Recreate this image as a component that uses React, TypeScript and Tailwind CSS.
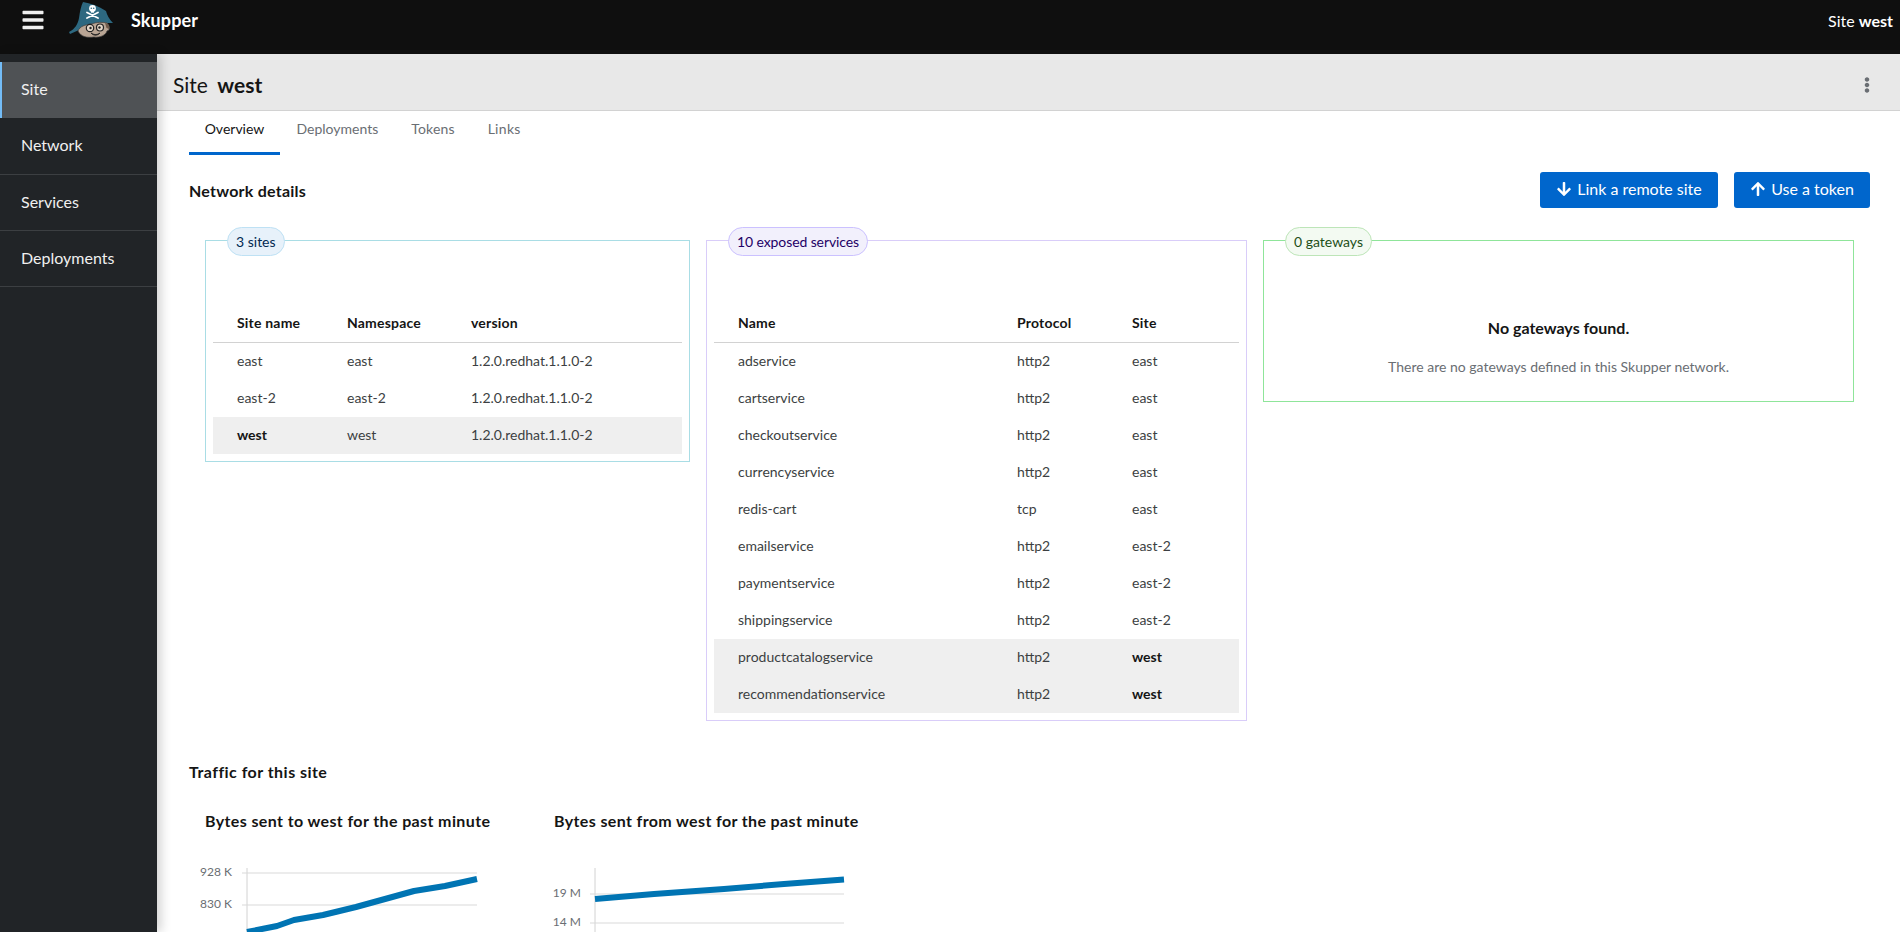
import React from "react";
import { FaArrowDown, FaArrowUp, FaBars, FaEllipsisV } from "react-icons/fa";

const font = "font-['Lato','Liberation_Sans',sans-serif]";

function Logo() {
  return (
    <svg width="46" height="40" viewBox="0 0 46 40" className="block">
      <path d="M14 2 C21 3 30 6 37 11 C38 15 40 19 44 23 L36 23 L20 25 L10 30 L1 34 L0 32 C6 29 9 24 10 18 C11 11 12 6 14 2 Z" fill="#2d6880" />
      <path d="M9 31 C11 26 16 25 22 24 C28 22 34 22 38 23 C40 25 41 27 40 30 L38 31 C37 35 31 38 25 37 C18 38 12 37 9 31 Z" fill="#b9a594" stroke="#3a3a3a" strokeWidth="0.7" />
      <circle cx="23.500" cy="8.500" r="3.400" fill="#fff" />
      <rect x="22" y="10.500" width="3" height="2.200" fill="#fff" />
      <path d="M18 12.500 L29 18 M29 12.500 L18 18" stroke="#fff" strokeWidth="1.800" strokeLinecap="round" />
      <circle cx="22.300" cy="8.300" r="0.800" fill="#2d6880" />
      <circle cx="24.700" cy="8.300" r="0.800" fill="#2d6880" />
      <circle cx="21" cy="28" r="3.700" fill="#e4d8ca" stroke="#222" strokeWidth="1.200" />
      <circle cx="31" cy="27.500" r="3.500" fill="#e4d8ca" stroke="#222" strokeWidth="1.200" />
      <circle cx="21.500" cy="28" r="1.200" fill="#222" />
      <circle cx="30.500" cy="27.500" r="1.200" fill="#222" />
      <path d="M22 33 C25 35 28 35 31 33 C28 36 25 36 22 33 Z" fill="#222" stroke="#222" strokeWidth="0.800" />
      <path d="M36 23 C39 23 41 26 40 29 L37.500 28 Z" fill="#6f5a4b" />
    </svg>
  );
}

const navItems = ["Site", "Network", "Services", "Deployments"];

function Sidebar() {
  return (
    <aside className="z-10 w-[157px] shrink-0 bg-[#212427] pt-2 shadow-[4px_0_10px_rgba(3,3,3,0.18)]">
      {navItems.map((n, i) => (
        <div
          key={n}
          className={
            i === 0
              ? "flex h-14 items-center border-l-2 border-[#73bcf7] bg-[#4f5255] pb-[2px] pl-[19px] text-base text-[#f0f0f0]"
              : i === 1
                ? "flex h-[57px] items-center border-b border-[#3c3f42] pb-[3px] pl-[21px] text-base text-[#f0f0f0]"
                : "flex h-14 items-center border-b border-[#3c3f42] pb-[2px] pl-[21px] text-base text-[#f0f0f0]"
          }
        >
          {n}
        </div>
      ))}
    </aside>
  );
}

function Pill({ label, cls }: { label: string; cls: string }) {
  return (
    <div className={`absolute left-[21px] top-[-14px] flex h-[29px] items-center rounded-full border px-2 text-[14px] ${cls}`}>
      {label}
    </div>
  );
}

type Row = { cells: string[]; bold?: number; hi?: boolean };

function DataTable({ cols, heads, rows }: { cols: string[]; heads: string[]; rows: Row[] }) {
  return (
    <div className="text-[14px]">
      <div className="flex h-[38px] items-center border-b border-[#d2d2d2] pb-[2px] font-bold tracking-[0.2px] text-[#151515]">
        {heads.map((h, i) => (
          <div key={h} className={cols[i]}>{h}</div>
        ))}
      </div>
      {rows.map((r) => (
        <div key={r.cells[0]} className={`flex h-[37px] items-center pb-[2px] text-[#3c3f42] ${r.hi ? "bg-[#efefef]" : ""}`}>
          {r.cells.map((c, i) => (
            <div key={i} className={`${cols[i]} ${r.bold === i ? "font-bold text-[#151515]" : ""}`}>{c}</div>
          ))}
        </div>
      ))}
    </div>
  );
}

const siteRows: Row[] = [
  { cells: ["east", "east", "1.2.0.redhat.1.1.0-2"] },
  { cells: ["east-2", "east-2", "1.2.0.redhat.1.1.0-2"] },
  { cells: ["west", "west", "1.2.0.redhat.1.1.0-2"], bold: 0, hi: true },
];

const svcRows: Row[] = [
  { cells: ["adservice", "http2", "east"] },
  { cells: ["cartservice", "http2", "east"] },
  { cells: ["checkoutservice", "http2", "east"] },
  { cells: ["currencyservice", "http2", "east"] },
  { cells: ["redis-cart", "tcp", "east"] },
  { cells: ["emailservice", "http2", "east-2"] },
  { cells: ["paymentservice", "http2", "east-2"] },
  { cells: ["shippingservice", "http2", "east-2"] },
  { cells: ["productcatalogservice", "http2", "west"], bold: 2, hi: true },
  { cells: ["recommendationservice", "http2", "west"], bold: 2, hi: true },
];

function Chart1() {
  return (
    <svg width="300" height="85" className="-ml-3 mt-[31px] block">
      <g transform="translate(12,0)">
        <path d="M42 4 V85" stroke="#d2d2d2" strokeWidth="1" />
        <path d="M37 9 H272 M37 41 H272" stroke="#d9d9d9" strokeWidth="1" />
        <text x="27" y="12" textAnchor="end" fontSize="12" fill="#6a6e73">928 K</text>
        <text x="27" y="44" textAnchor="end" fontSize="12" fill="#6a6e73">830 K</text>
        <polyline points="42,68 72,62 89,56 118,51 151,43 180,35 209,27 240,22 272,15" fill="none" stroke="#0074b3" strokeWidth="6" strokeLinejoin="round" />
      </g>
    </svg>
  );
}

function Chart2() {
  return (
    <svg width="312" height="85" className="-ml-3 mt-[31px] block">
      <g transform="translate(12,0)">
        <path d="M41 4 V85" stroke="#d2d2d2" strokeWidth="1" />
        <path d="M36 30 H290 M36 59 H290" stroke="#d9d9d9" strokeWidth="1" />
        <text x="27" y="33" textAnchor="end" fontSize="12" fill="#6a6e73">19 M</text>
        <text x="27" y="62" textAnchor="end" fontSize="12" fill="#6a6e73">14 M</text>
        <polyline points="41,35 100,30 170,25 230,20 290,15.500" fill="none" stroke="#0074b3" strokeWidth="6" strokeLinejoin="round" />
      </g>
    </svg>
  );
}

export default function App() {
  return (
    <div className={`${font} flex h-[932px] flex-col overflow-hidden bg-white text-[#151515]`}>
      <header className="flex h-[54px] shrink-0 items-start justify-between bg-[#0f0f0f] pr-[7px] text-white">
        <div className="flex items-center">
          <FaBars className="ml-[21px] text-[#f0f0f0]" size={24} />
          <div className="ml-[24px]"><Logo /></div>
          <span className="ml-[16px] text-[18px] font-bold tracking-[0.1px]">Skupper</span>
        </div>
        <div className="pt-[9px] text-[16px]">
          Site <span className="font-bold">west</span>
        </div>
      </header>
      <div className="flex min-h-0 flex-1">
        <Sidebar />
        <main className="min-w-0 flex-1 overflow-hidden">
          <div className="flex h-[57px] items-center justify-between border-b border-[#d2d2d2] bg-[#e8e8e8] pl-4 pr-[25px] pt-[4px]">
            <div className="text-[21px] leading-none">
              Site <span className="ml-[4px] font-bold">west</span>
            </div>
            <FaEllipsisV className="mt-[2px] text-[#6a6e73]" size={16} />
          </div>
          <nav className="ml-8 flex h-11 items-start text-[14px] text-[#6a6e73]">
            <div className="h-11 w-[91px] border-b-[3px] border-[#0066cc] pt-[7px] text-center text-[#151515]">Overview</div>
            <div className="h-11 px-[16.5px] pt-[7px]">Deployments</div>
            <div className="h-11 px-[16.5px] pt-[7px] tracking-[0.15px]">Tokens</div>
            <div className="h-11 px-[16.5px] pt-[7px] tracking-[0.3px]">Links</div>
          </nav>
          <section className="pl-8 pr-[30px] pt-[17px]">
            <div className="flex h-9 items-center justify-between">
              <h2 className="pt-[2px] text-base font-bold tracking-[0.24px]">Network details</h2>
              <div className="flex gap-4">
                <button className="flex h-9 w-[178px] items-center justify-center gap-[5px] rounded-[3px] bg-[#0066cc] pb-[2px] text-base text-white">
                  <FaArrowDown size={16} /> Link a remote site
                </button>
                <button className="flex h-9 w-[136px] items-center justify-center gap-[5px] rounded-[3px] bg-[#0066cc] pb-[2px] text-base text-white">
                  <FaArrowUp size={16} /> Use a token
                </button>
              </div>
            </div>
            <div className="mt-8 ml-4 flex items-start gap-4">
              <div className="relative w-[485px] border border-[#a9dde5] px-[7px] pb-[7px] pt-[64px]">
                <Pill label="3 sites" cls="border-[#bee1f4] bg-[#e7f1fa] text-[#002952]" />
                <DataTable
                  cols={["w-[134px] pl-6", "w-[124px] pl-0", "flex-1"]}
                  heads={["Site name", "Namespace", "version"]}
                  rows={siteRows}
                />
              </div>
              <div className="relative w-[541px] border border-[#d9cdf9] px-[7px] pb-[7px] pt-[64px]">
                <Pill label="10 exposed services" cls="border-[#cbc1ff] bg-[#f2f0fc] tracking-[-0.1px] text-[#1f0066]" />
                <DataTable
                  cols={["w-[303px] pl-6", "w-[115px]", "flex-1"]}
                  heads={["Name", "Protocol", "Site"]}
                  rows={svcRows}
                />
              </div>
              <div className="relative flex h-[162px] w-[591px] flex-col items-center border border-[#8fe59a] pt-[75px]">
                <Pill label="0 gateways" cls="border-[#bde5b8] bg-[#f3faf2] text-[#1e4f18]" />
                <div className="text-base font-bold leading-6">No gateways found.</div>
                <div className="mt-[17px] text-[14px] leading-5 text-[#6a6e73]">There are no gateways defined in this Skupper network.</div>
              </div>
            </div>
            <h2 className="mt-[39px] text-base font-bold leading-6 tracking-[0.46px]">Traffic for this site</h2>
            <div className="ml-4 mt-[25px] flex">
              <div className="w-[349px] shrink-0">
                <h3 className="text-base font-bold leading-6 tracking-[0.38px]">Bytes sent to west for the past minute</h3>
                <Chart1 />
              </div>
              <div>
                <h3 className="text-base font-bold leading-6 tracking-[0.37px]">Bytes sent from west for the past minute</h3>
                <Chart2 />
              </div>
            </div>
          </section>
        </main>
      </div>
    </div>
  );
}
